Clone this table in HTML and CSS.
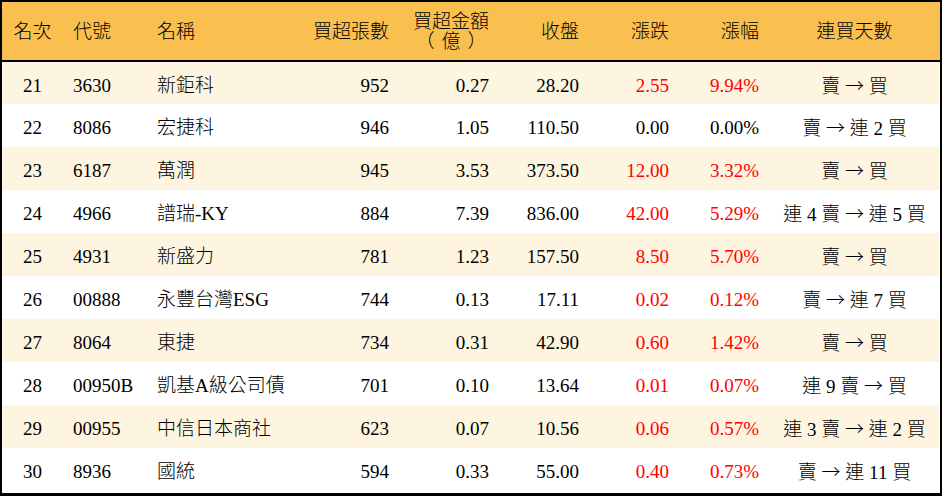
FILE: index.html
```html
<!DOCTYPE html>
<html lang="zh-Hant">
<head>
<meta charset="utf-8">
<link rel="stylesheet" href="styles.css">
</head>
<body>
<div class="frame">
<table class="rank">
<colgroup>
<col class="c-rank"><col class="c-code"><col class="c-name"><col class="c-vol"><col class="c-amt"><col class="c-close"><col class="c-chg"><col class="c-pct"><col class="c-days">
</colgroup>
<thead>
<tr>
<th class="ctr">名次</th>
<th class="lft">代號</th>
<th class="lft">名稱</th>
<th class="rgt">買超張數</th>
<th class="rgt amt-h">買超金額<br><span class="sub">（億）</span></th>
<th class="rgt">收盤</th>
<th class="rgt">漲跌</th>
<th class="rgt">漲幅</th>
<th class="ctr">連買天數</th>
</tr>
</thead>
<tbody>
<tr class="alt"><td class="ctr">21</td><td class="lft">3630</td><td class="lft">新鉅科</td><td class="rgt">952</td><td class="rgt">0.27</td><td class="rgt">28.20</td><td class="rgt up">2.55</td><td class="rgt up">9.94%</td><td class="ctr">賣 <span class="arr">→</span> 買</td></tr>
<tr><td class="ctr">22</td><td class="lft">8086</td><td class="lft">宏捷科</td><td class="rgt">946</td><td class="rgt">1.05</td><td class="rgt">110.50</td><td class="rgt">0.00</td><td class="rgt">0.00%</td><td class="ctr">賣 <span class="arr">→</span> 連 2 買</td></tr>
<tr class="alt"><td class="ctr">23</td><td class="lft">6187</td><td class="lft">萬潤</td><td class="rgt">945</td><td class="rgt">3.53</td><td class="rgt">373.50</td><td class="rgt up">12.00</td><td class="rgt up">3.32%</td><td class="ctr">賣 <span class="arr">→</span> 買</td></tr>
<tr><td class="ctr">24</td><td class="lft">4966</td><td class="lft">譜瑞-KY</td><td class="rgt">884</td><td class="rgt">7.39</td><td class="rgt">836.00</td><td class="rgt up">42.00</td><td class="rgt up">5.29%</td><td class="ctr">連 4 賣 <span class="arr">→</span> 連 5 買</td></tr>
<tr class="alt"><td class="ctr">25</td><td class="lft">4931</td><td class="lft">新盛力</td><td class="rgt">781</td><td class="rgt">1.23</td><td class="rgt">157.50</td><td class="rgt up">8.50</td><td class="rgt up">5.70%</td><td class="ctr">賣 <span class="arr">→</span> 買</td></tr>
<tr><td class="ctr">26</td><td class="lft">00888</td><td class="lft">永豐台灣ESG</td><td class="rgt">744</td><td class="rgt">0.13</td><td class="rgt">17.11</td><td class="rgt up">0.02</td><td class="rgt up">0.12%</td><td class="ctr">賣 <span class="arr">→</span> 連 7 買</td></tr>
<tr class="alt"><td class="ctr">27</td><td class="lft">8064</td><td class="lft">東捷</td><td class="rgt">734</td><td class="rgt">0.31</td><td class="rgt">42.90</td><td class="rgt up">0.60</td><td class="rgt up">1.42%</td><td class="ctr">賣 <span class="arr">→</span> 買</td></tr>
<tr><td class="ctr">28</td><td class="lft">00950B</td><td class="lft">凱基A級公司債</td><td class="rgt">701</td><td class="rgt">0.10</td><td class="rgt">13.64</td><td class="rgt up">0.01</td><td class="rgt up">0.07%</td><td class="ctr">連 9 賣 <span class="arr">→</span> 買</td></tr>
<tr class="alt"><td class="ctr">29</td><td class="lft">00955</td><td class="lft">中信日本商社</td><td class="rgt">623</td><td class="rgt">0.07</td><td class="rgt">10.56</td><td class="rgt up">0.06</td><td class="rgt up">0.57%</td><td class="ctr">連 3 賣 <span class="arr">→</span> 連 2 買</td></tr>
<tr><td class="ctr">30</td><td class="lft">8936</td><td class="lft">國統</td><td class="rgt">594</td><td class="rgt">0.33</td><td class="rgt">55.00</td><td class="rgt up">0.40</td><td class="rgt up">0.73%</td><td class="ctr">賣 <span class="arr">→</span> 連 11 買</td></tr>
</tbody>
</table>
</div>
</body>
</html>
```

FILE: styles.css
```css
html, body {
  margin: 0;
  padding: 0;
  background: #ffffff;
}

.frame {
  width: 942px;
  height: 496px;
  box-sizing: border-box;
  border: 2px solid #000;
  border-bottom-width: 3px;
  overflow: hidden;
  background: #fff;
}

.rank {
  width: 938px;
  border-collapse: collapse;
  table-layout: fixed;
  font-family: "Liberation Serif", "Noto Sans CJK TC", serif;
  font-size: 19px;
  font-weight: 300;
  color: #000;
}

.c-rank { width: 61px; }
.c-code { width: 84px; }
.c-name { width: 162px; }
.c-vol { width: 90px; }
.c-amt { width: 100px; }
.c-close { width: 90px; }
.c-chg { width: 90px; }
.c-pct { width: 90px; }
.c-days { width: 171px; }

.rank thead tr {
  height: 59px;
  background: #f9c04f;
}

.rank th {
  font-weight: 300;
  padding: 2px 10px 0 0;
  line-height: 20px;
  border-bottom: 2px solid #000;
  white-space: nowrap;
}

.rank th.lft {
  padding-left: 10px;
}

.rank th.ctr {
  padding: 2px 0 0;
}

.rank th.amt-h {
  text-align: center;
  padding-left: 4px;
  padding-right: 0;
}

.sub {
  letter-spacing: 7px;
  margin-right: -7px;
}

.rank tbody tr {
  height: 43px;
  background: #ffffff;
}

.rank tbody tr.alt {
  background: #fef5e1;
}

.rank td {
  padding: 5px 10px 0;
  line-height: 22px;
  white-space: nowrap;
}

.arr {
  font-family: "Noto Sans CJK TC", sans-serif;
  font-weight: 300;
}

.ctr { text-align: center; }
.lft { text-align: left; }
.rgt { text-align: right; }

.up { color: #ff0000; }
```
